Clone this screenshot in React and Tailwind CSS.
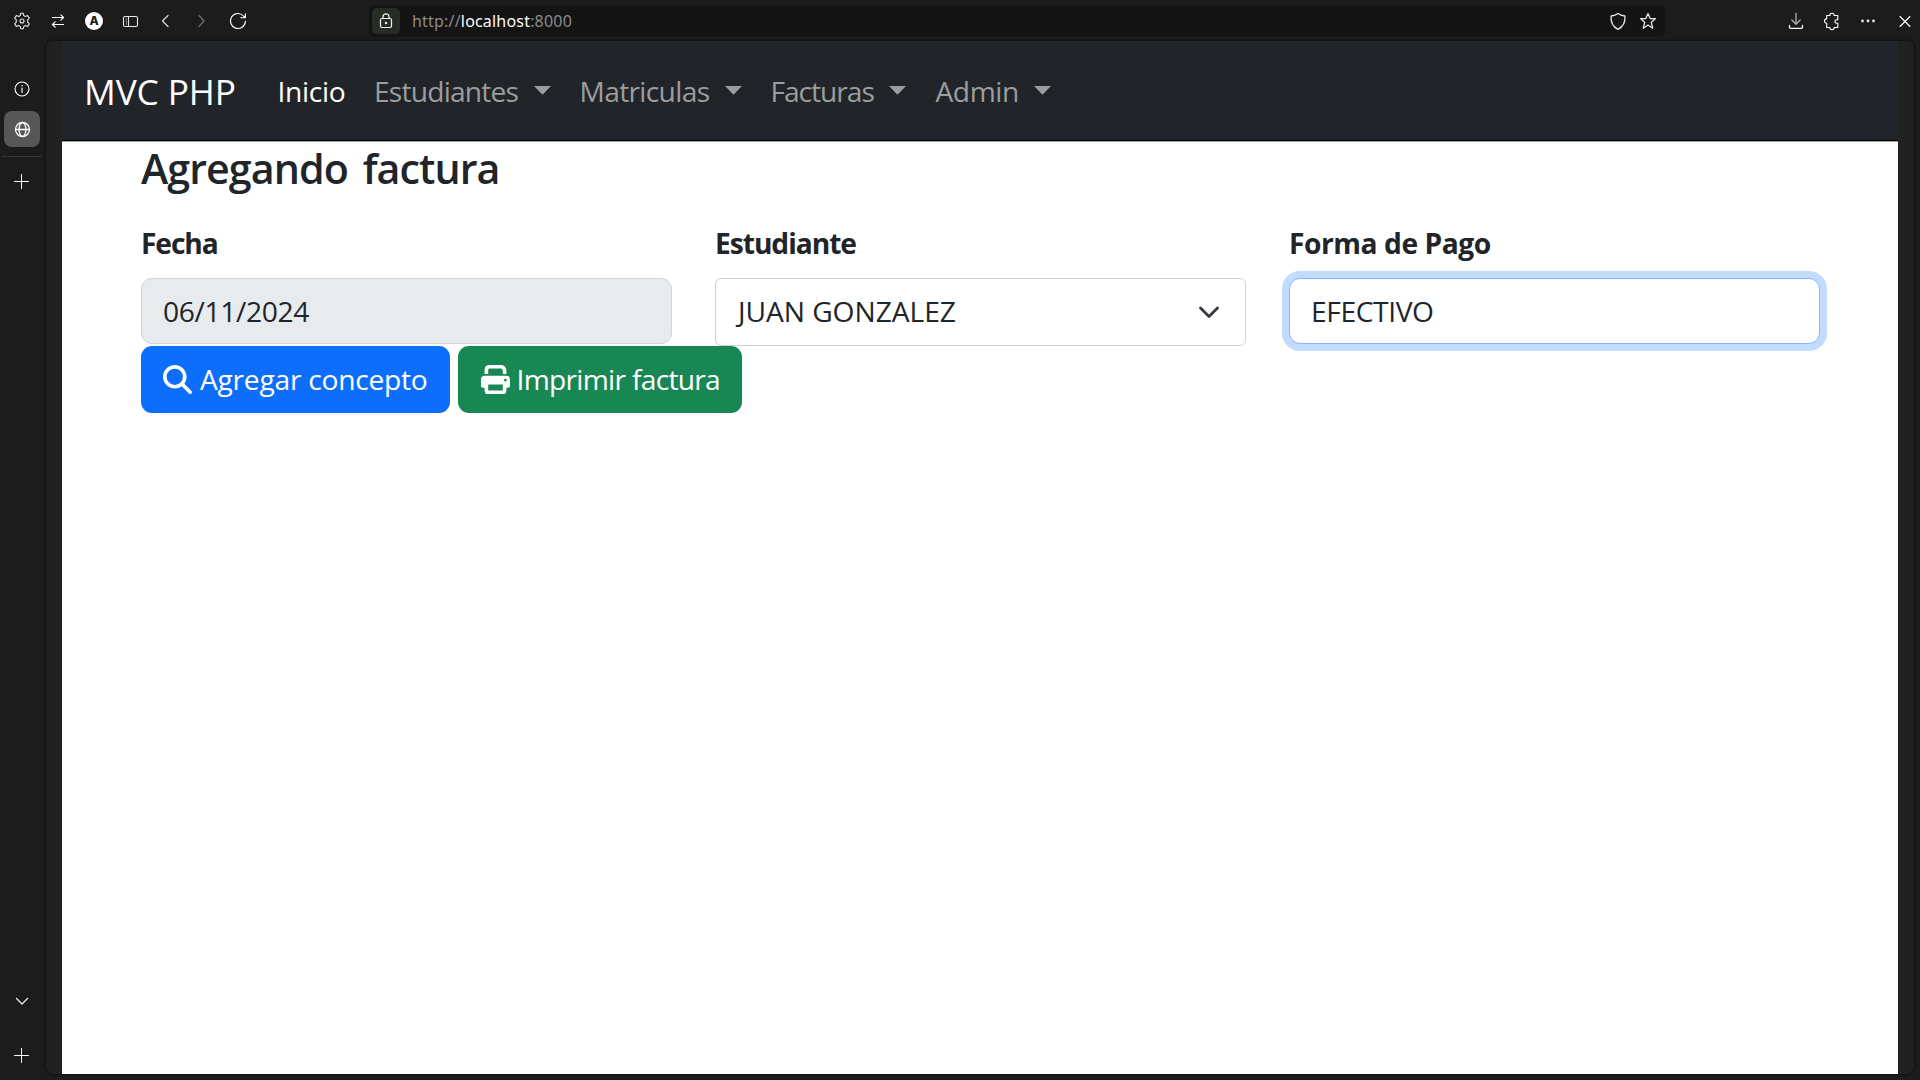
const Icon = ({ children, className = "text-[#e6e6e6]", size = 20, w = 1.1 }) => (
  <svg
    width={size}
    height={size}
    viewBox={`0 0 ${size} ${size}`}
    fill="none"
    stroke="currentColor"
    strokeWidth={w}
    strokeLinecap="round"
    strokeLinejoin="round"
    className={`shrink-0 ${className}`}
  >
    {children}
  </svg>
);

const Cell = ({ children }) => (
  <div className="flex h-[42px] w-9 shrink-0 items-center justify-center">{children}</div>
);

const GEAR =
  "M8.7 2.3h2.6l.5 2.3 1.5.9 2.3-.9 1.7 2.5-1.6 1.7v2.4l1.6 1.7-1.7 2.5-2.3-.9-1.5.9-.5 2.3H8.7l-.5-2.3-1.5-.9-2.3.9-1.7-2.5 1.6-1.7V8.8L2.7 7.1l1.7-2.5 2.3.9 1.5-.9z";

function Toolbar() {
  return (
    <header className="flex h-[41px] items-center">
      <div className="flex shrink-0 pl-1">
        <Cell>
          <Icon>
            <path d={GEAR} />
            <circle cx="10" cy="10" r="2" />
          </Icon>
        </Cell>
        <Cell>
          <Icon className="text-white">
            <path d="M4.5 6.500h11M12.800 3.800l2.800 2.700-2.800 2.700M15.500 13.500h-11M7.200 10.800l-2.800 2.700 2.800 2.700" />
          </Icon>
        </Cell>
        <Cell>
          <span className="flex size-[18px] items-center justify-center rounded-full bg-white font-['Inter',sans-serif] text-[12px] leading-none font-extrabold text-[#1c1c1c]">
            A
          </span>
        </Cell>
        <Cell>
          <Icon>
            <rect x="3.500" y="5.500" width="14" height="10" rx="1.600" />
            <path d="M8.500 5.500v10" />
            <path d="M6.300 7.500v6" strokeWidth=".5" />
          </Icon>
        </Cell>
        <Cell>
          <Icon className="text-[#d8d8d8]" w={1.300}>
            <path d="M12 4.500 6.500 10l5.500 5.500" />
          </Icon>
        </Cell>
        <Cell>
          <Icon className="text-[#6c6c6c]" w={1.300}>
            <path d="M7 4.500 12 10l-5 5.500" />
          </Icon>
        </Cell>
        <Cell>
          <Icon className="text-white">
            <path d="M17.400 10.400A7.500 7.500 0 1 1 15.500 5l1.600 1.700M17.400 2.700v4.100h-4.600" />
          </Icon>
        </Cell>
      </div>
      <div className="ml-[113px] flex h-8 w-[1296px] shrink-0 items-center rounded-[5px] bg-[#141414] pr-0.5 pl-[3px]">
        <div className="flex h-[26px] w-7 items-center justify-center rounded-[5px] bg-[#272d25]">
          <Icon className="text-[#eef2ec]" w={1.200}>
            <rect x="4.500" y="7.500" width="11" height="9" rx="1.400" />
            <path d="M7 7.500V5.800a3 3 0 0 1 6 0v1.700" />
            <circle cx="10" cy="12" r=".6" fill="currentColor" />
          </Icon>
        </div>
        <div className="ml-[12px] flex-1 font-['Noto_Sans','Open_Sans',sans-serif] text-[16px] leading-8 tracking-[0.190px] whitespace-pre text-[#8b8b8b]">
          http://<span className="text-[#fbfbfb]">localhost</span>:8000
        </div>
        <div className="flex w-[30px] justify-center">
          <Icon w={1.300}>
            <path d="M10 2.600c2 1.500 4.300 2.100 6.900 2.400.6 6.500-1.700 10.700-6.900 13.300C4.800 15.700 2.500 11.500 3.100 5 5.700 4.700 8 4.100 10 2.600z" />
          </Icon>
        </div>
        <div className="flex w-[30px] justify-center">
          <Icon w={1.300}>
            <path d="M10 2.600l2.200 5h5.300l-4.200 3.700 1.400 5.900-4.700-3.200-4.700 3.200 1.400-5.900-4.200-3.700h5.300z" />
          </Icon>
        </div>
      </div>
      <div className="ml-[113px] flex shrink-0">
        <Cell>
          <Icon w={1.300}>
            <path d="M10 2.500v10M5.800 9l4.200 4.200L14.200 9" className="text-[#b0b0b0]" stroke="currentColor" />
            <path d="M3.500 14.500v1.600q0 1.200 1.200 1.200h10.600q1.200 0 1.200-1.200v-1.600" className="text-white" stroke="currentColor" />
          </Icon>
        </Cell>
        <Cell>
          <Icon className="text-white">
            <path d="M4.700 4.500h3.100a2.200 2.200 0 0 1 4.400 0h3.600v4.200h-1.100a1.800 1.800 0 0 0 0 3.600h1.100v4.200h-3.600a2.200 2.200 0 0 1-4.400 0H4.700v-4.200a2.200 2.200 0 0 1 0-4.400z" />
          </Icon>
        </Cell>
        <Cell>
          <Icon>
            <g fill="currentColor" stroke="none">
              <circle cx="4.500" cy="10" r="1.400" />
              <circle cx="10" cy="10" r="1.400" />
              <circle cx="15.500" cy="10" r="1.400" />
            </g>
          </Icon>
        </Cell>
        <Cell>
          <Icon className="text-white" w={1.100}>
            <path d="M6 5.500l10 10M16 5.500l-10 10" />
          </Icon>
        </Cell>
      </div>
    </header>
  );
}

function Sidebar() {
  return (
    <aside className="flex w-[46px] shrink-0 flex-col pl-1">
      <div className="mt-[30px] flex h-9 w-9 items-center justify-center">
        <Icon className="mr-px text-white">
          <circle cx="10" cy="10" r="7" />
          <path d="M10 9v4.500" />
          <path d="M10 6.700v.1" strokeWidth="1.500" />
        </Icon>
      </div>
      <div className="mt-1 flex h-9 w-9 items-center justify-center rounded-lg bg-[#575757]">
        <Icon className="text-white" w={1.300}>
          <circle cx="10.500" cy="10.500" r="7" />
          <ellipse cx="10.500" cy="10.500" rx="3.400" ry="7" />
          <path d="M3.500 10.500h14" />
        </Icon>
      </div>
      <div className="mt-[9px] -ml-0.5 h-px w-10 bg-[#363636]" />
      <div className="mt-[7px] flex h-9 w-9 items-center justify-center">
        <Icon className="text-white" w={1}>
          <path d="M9.500 2.500v14M2.500 9.500h14" />
        </Icon>
      </div>
      <div className="mt-auto flex h-9 w-9 items-center justify-center">
        <Icon w={1.400}>
          <path d="M4.500 7.500 10 13l5.500-5.500" />
        </Icon>
      </div>
      <div className="mt-[19px] mb-[6px] flex h-9 w-9 items-center justify-center">
        <Icon className="text-white" w={1}>
          <path d="M9.500 2.500v14M2.500 9.500h14" />
        </Icon>
      </div>
    </aside>
  );
}

const Caret = () => (
  <svg width="17" height="9" viewBox="0 0 17 9" className="mb-[1px] fill-[#9b9d9e]">
    <path d="M0 0h17L8.500 8.700z" />
  </svg>
);

function Navbar() {
  return (
    <nav className="flex h-[100px] items-center border-b border-black bg-[#212529] pt-px pl-[22px] text-[28.200px] whitespace-nowrap text-[#9b9d9e]">
      <a className="w-[193.500px] text-[35.300px] tracking-[-0.120px] text-white">MVC PHP</a>
      <a className="w-[96.500px] tracking-[-0.330px] text-white">Inicio</a>
      <a className="flex w-[205.500px] items-center">
        <span className="w-[159.500px] tracking-[-0.800px]">Estudiantes</span>
        <Caret />
      </a>
      <a className="flex w-[191px] items-center">
        <span className="w-[145px] tracking-[-0.680px]">Matriculas</span>
        <Caret />
      </a>
      <a className="flex w-[165px] items-center">
        <span className="w-[118px] tracking-[-1.050px]">Facturas</span>
        <Caret />
      </a>
      <a className="flex items-center">
        <span className="w-[98px] tracking-[-0.464px]">Admin</span>
        <Caret />
      </a>
    </nav>
  );
}

const Search = () => (
  <svg width="29" height="29" viewBox="0 0 512 512" fill="currentColor">
    <path d="M416 208c0 45.900-14.900 88.300-40 122.700L502.600 457.400c12.500 12.500 12.500 32.800 0 45.300s-32.800 12.500-45.300 0L330.700 376c-34.400 25.200-76.800 40-122.700 40C93.100 416 0 322.900 0 208S93.100 0 208 0s208 93.100 208 208zM208 352a144 144 0 1 0 0-288 144 144 0 1 0 0 288z" />
  </svg>
);

const Printer = () => (
  <svg width="29" height="29" viewBox="0 0 29 29" fill="none">
    <path d="M5.400 9V5Q5.400 1.800 8.600 1.800h11.200q1.600 0 2.700 1 1.100 1 1.100 2.600V9" stroke="currentColor" strokeWidth="3.600" />
    <path
      fillRule="evenodd"
      fill="currentColor"
      d="M3.600 10.800h21.800A3.600 3.600 0 0 1 29 14.400v6.500a1.800 1.800 0 0 1-1.800 1.800h-1.800v2.700a3.600 3.600 0 0 1-3.600 3.600H7.200a3.600 3.600 0 0 1-3.600-3.600v-2.700H1.800A1.800 1.800 0 0 1 0 20.900v-6.500a3.600 3.600 0 0 1 3.600-3.600zM7.200 19.600v5.800h14.600v-5.800zM24.400 13.800a1.350 1.350 0 1 0 0 2.700 1.350 1.350 0 0 0 0-2.700z"
    />
  </svg>
);

function InvoiceForm() {
  return (
    <main className="flex-1 border-t border-[#a6a6a6] bg-white pl-[79px] text-[28.200px] text-[#212529]">
      <h1 className="h-[52px] text-[41.200px] leading-[52px] font-semibold tracking-[-0.930px] [word-spacing:5px] whitespace-nowrap">
        Agregando factura
      </h1>
      <div className="mt-[26px] grid grid-cols-[531px_531px_531px] gap-[43px]">
        <div className="h-[126px]">
          <label className="block h-[58px] pt-px leading-[44px] font-bold tracking-[-1.100px]">Fecha</label>
          <div className="flex h-[66px] items-center rounded-[11px] border border-[#ced4da] bg-[#e7ebee] pt-px pl-5 tracking-[-0.349px]">
            <span className="ml-px">06/11/2024</span>
          </div>
        </div>
        <div className="h-[126px]">
          <label className="block h-[58px] pt-px leading-[44px] font-bold tracking-[-1.050px]">Estudiante</label>
          <div className="flex h-[68px] items-center justify-between rounded-[6px] border border-[#ccd2da] pr-[24px] pb-px pl-[22px] tracking-[-0.060px]">
            <span>JUAN GONZALEZ</span>
            <svg width="24" height="16" viewBox="0 0 24 16" fill="none" stroke="#343a40" strokeWidth="2.800" strokeLinecap="round" strokeLinejoin="round">
              <path d="M3.500 4l8.500 8.500L20.500 4" />
            </svg>
          </div>
        </div>
        <div className="h-[126px]">
          <label className="block h-[58px] pt-px leading-[44px] font-bold tracking-[-0.450px]">Forma de Pago</label>
          <div className="flex h-[66px] items-center rounded-[11px] border border-[#86b7fe] bg-white pt-px pl-[21px] tracking-[-0.400px] ring-7 ring-[#c2dbff]">
            EFECTIVO
          </div>
        </div>
      </div>
      <div className="flex gap-2 text-white">
        <button className="flex h-[67px] w-[309px] items-center rounded-[11px] bg-[#0d6efd] pl-[22px]">
          <Search />
          <span className="ml-[8px] tracking-[-0.259px] whitespace-nowrap">Agregar concepto</span>
        </button>
        <button className="flex h-[67px] w-[284px] items-center rounded-[11px] bg-[#198754] pl-[23px]">
          <Printer />
          <span className="ml-[6.500px] tracking-[-0.720px] whitespace-nowrap">Imprimir factura</span>
        </button>
      </div>
    </main>
  );
}

export default function App() {
  return (
    <div className="flex h-[1080px] w-[1920px] flex-col overflow-hidden bg-[#1c1c1c] font-['Open_Sans',sans-serif]">
      <Toolbar />
      <div className="flex min-h-0 flex-1">
        <Sidebar />
        <div className="mr-[6px] mb-[6px] flex flex-1 rounded-[7px] bg-[#212121] px-4 shadow-[0_0_3px_#000]">
          <div className="flex flex-1 flex-col">
            <Navbar />
            <InvoiceForm />
          </div>
        </div>
      </div>
    </div>
  );
}
